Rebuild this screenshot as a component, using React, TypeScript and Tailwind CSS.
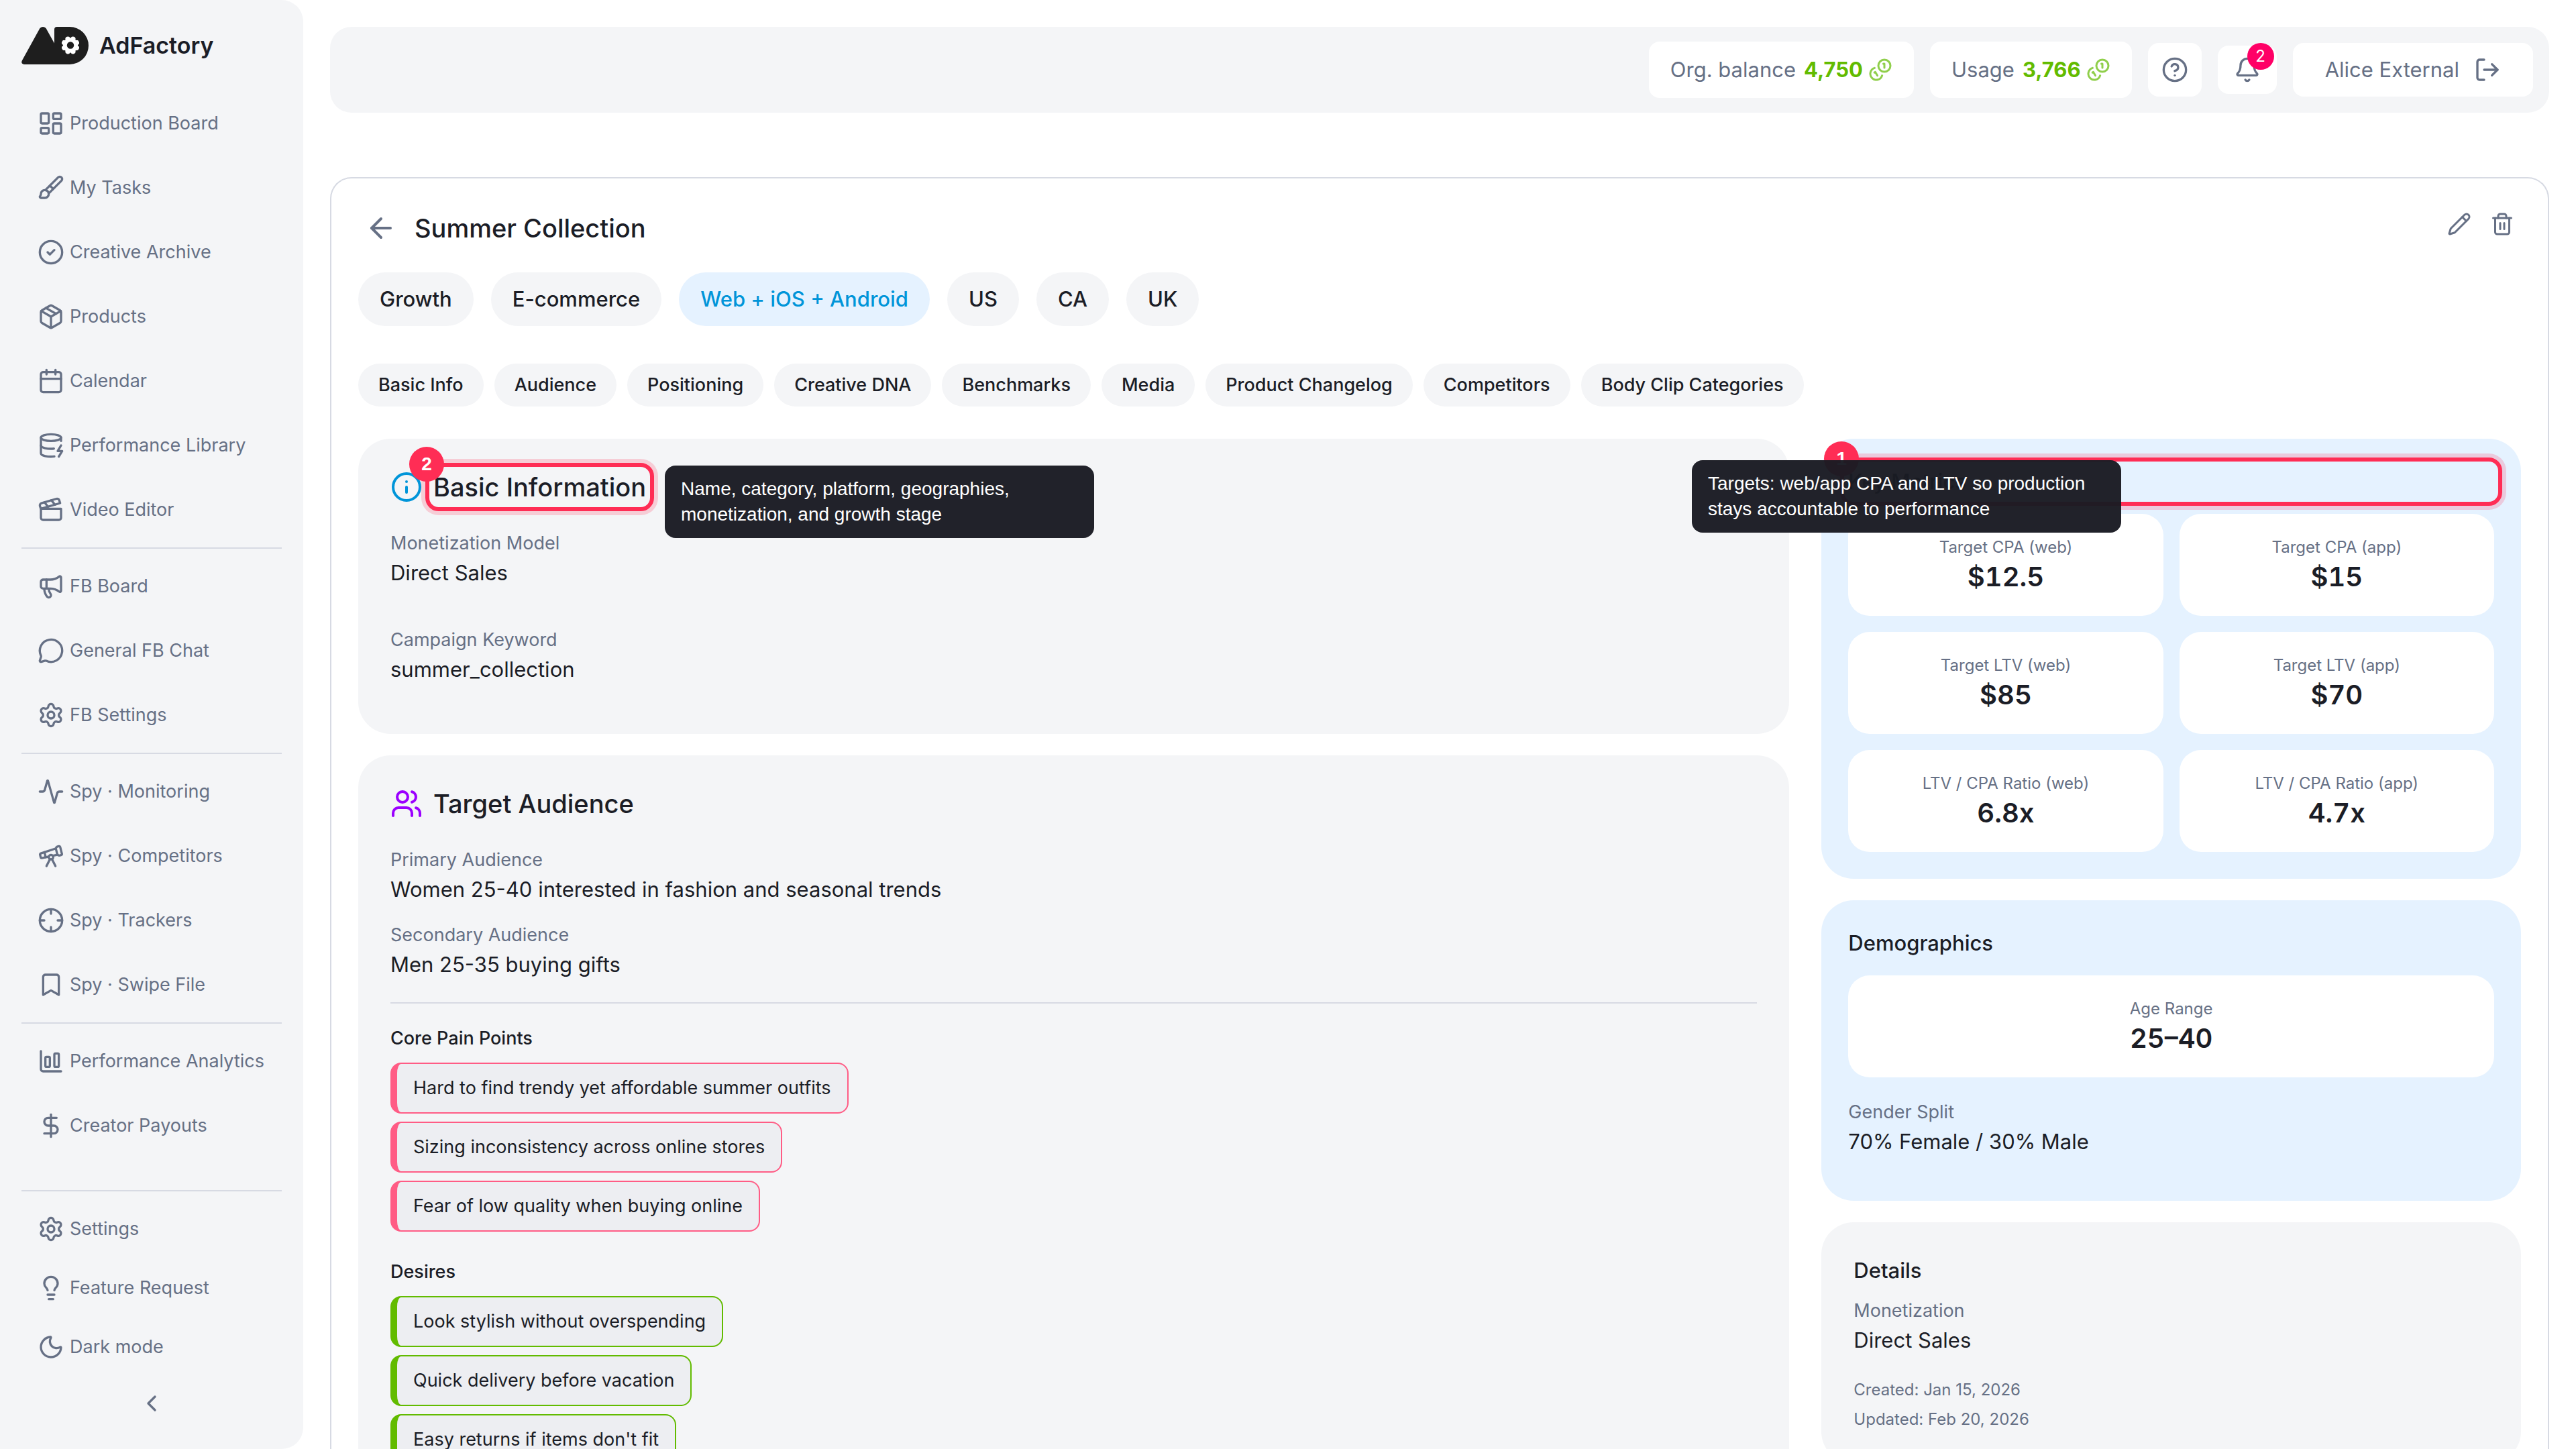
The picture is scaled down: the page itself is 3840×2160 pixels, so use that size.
import React from 'react';
import {
  Activity, ArrowLeft, Bell, Bookmark, Brush, Calendar, ChartColumnBig, ChevronLeft,
  CircleCheck, CircleQuestionMark, Clapperboard, Crosshair, DatabaseZap, DollarSign,
  Info, LayoutDashboard, Lightbulb, LogOut, Megaphone, MessageCircle, Moon, Package,
  Pencil, Settings, Telescope, Trash2, Users, type LucideIcon
} from 'lucide-react';

interface NavItem { label: string; icon: LucideIcon; }

const NAV_GROUPS: NavItem[][] = [
  [
    { label: 'Production Board', icon: LayoutDashboard },
    { label: 'My Tasks', icon: Brush },
    { label: 'Creative Archive', icon: CircleCheck },
    { label: 'Products', icon: Package },
    { label: 'Calendar', icon: Calendar },
    { label: 'Performance Library', icon: DatabaseZap },
    { label: 'Video Editor', icon: Clapperboard },
  ],
  [
    { label: 'FB Board', icon: Megaphone },
    { label: 'General FB Chat', icon: MessageCircle },
    { label: 'FB Settings', icon: Settings },
  ],
  [
    { label: 'Spy · Monitoring', icon: Activity },
    { label: 'Spy · Competitors', icon: Telescope },
    { label: 'Spy · Trackers', icon: Crosshair },
    { label: 'Spy · Swipe File', icon: Bookmark },
  ],
  [
    { label: 'Performance Analytics', icon: ChartColumnBig },
    { label: 'Creator Payouts', icon: DollarSign },
  ],
];

const TAGS = ['Growth', 'E-commerce', 'Web + iOS + Android', 'US', 'CA', 'UK'];
const ACTIVE_TAG = 'Web + iOS + Android';

const SECTIONS = [
  'Basic Info', 'Audience', 'Positioning', 'Creative DNA', 'Benchmarks',
  'Media', 'Product Changelog', 'Competitors', 'Body Clip Categories',
];

const METRICS = [
  { label: 'Target CPA (web)', value: '$12.5' },
  { label: 'Target CPA (app)', value: '$15' },
  { label: 'Target LTV (web)', value: '$85' },
  { label: 'Target LTV (app)', value: '$70' },
  { label: 'LTV / CPA Ratio (web)', value: '6.8x' },
  { label: 'LTV / CPA Ratio (app)', value: '4.7x' },
];

const PAIN_POINTS = [
  'Hard to find trendy yet affordable summer outfits',
  'Sizing inconsistency across online stores',
  'Fear of low quality when buying online',
];

const DESIRES = [
  'Look stylish without overspending',
  'Quick delivery before vacation',
  "Easy returns if items don't fit",
];

const GEAR_TEETH = [22.5, 67.5, 112.5, 157.5, 202.5, 247.5, 292.5, 337.5];

const Logo = () => (
  <svg viewBox="0 0 100 56" className="h-14 w-[100px] shrink-0" aria-hidden="true">
    <path fill="#1e1e1e" d="M27.5 2Q32 -2 36.500 2L49 24.500V4Q49 0 53 0H72A28 28 0 0 1 72 56H4Q-1.500 55 1 50Z" />
    <g fill="#fff">
      <circle cx="73" cy="27.500" r="11" />
      {GEAR_TEETH.map(a => (
        <circle key={a} cx="73" cy="17.500" r="3.700" transform={`rotate(${a} 73 27.5)`} />
      ))}
    </g>
    <circle cx="73" cy="27.500" r="5.200" fill="#1e1e1e" />
  </svg>
);

const CoinsIcon = () => (
  <svg viewBox="0 0 24 24" className="size-9 opacity-70" fill="none" stroke="currentColor" strokeWidth="2" strokeLinecap="round" strokeLinejoin="round" aria-hidden="true">
    <path d="M13.744 17.736a6 6 0 1 1-7.48-7.48" />
    <path d="M15 6h1v4" />
    <path d="m6.134 14.768.866-.5 2 3.464" />
    <circle cx="16" cy="8" r="6" />
  </svg>
);

const NavLink = ({ label, icon: Icon }: NavItem) => (
  <a href="#" className="flex h-20 items-center gap-2 pl-6 text-[27px] leading-[40px]">
    <Icon className="size-10 shrink-0" />
    <span className="whitespace-nowrap">{label}</span>
  </a>
);

const Sidebar = () => (
  <aside className="flex h-full w-[452px] shrink-0 flex-col rounded-r-[32px] bg-[#f4f5f7] px-8 pt-10 text-[#667085]">
    <div className="flex items-center gap-4">
      <Logo />
      <span className="text-[34px] leading-[48px] font-semibold text-[#1b1d26]">AdFactory</span>
    </div>
    <nav className="mt-12 flex flex-col gap-4">
      {NAV_GROUPS.map((group, i) => (
        <React.Fragment key={i}>
          {i > 0 && <hr className="border-t-2 border-[#d7dae3]" />}
          {group.map(item => <NavLink key={item.label} {...item} />)}
        </React.Fragment>
      ))}
    </nav>
    <div className="mt-auto flex flex-col gap-2 pb-12">
      <hr className="mb-2 border-t-2 border-[#d7dae3]" />
      <NavLink label="Settings" icon={Settings} />
      <NavLink label="Feature Request" icon={Lightbulb} />
      <button type="button" className="flex h-20 items-center gap-2 pl-6 text-[27px] leading-[40px]">
        <Moon className="size-10 shrink-0" />
        Dark mode
      </button>
      <button type="button" aria-label="Collapse sidebar" className="mt-4 flex justify-center">
        <ChevronLeft className="size-10" />
      </button>
    </div>
  </aside>
);

const Balance = ({ label, value }: { label: string; value: string }) => (
  <div className="flex h-[84px] items-center gap-3 rounded-2xl bg-white px-8">
    <span>{label}</span>
    <span className="flex items-center gap-2 font-bold text-[#62bb00]">
      {value}
      <CoinsIcon />
    </span>
  </div>
);

const TopBar = () => (
  <header className="flex h-32 shrink-0 items-center justify-end gap-6 rounded-[32px] bg-[#f4f5f7] px-6 text-[31px] leading-[48px] text-[#667085]">
    <Balance label="Org. balance" value="4,750" />
    <Balance label="Usage" value="3,766" />
    <button type="button" aria-label="Help" className="flex size-20 items-center justify-center rounded-2xl bg-white">
      <CircleQuestionMark className="size-10" />
    </button>
    <button type="button" aria-label="Notifications" className="relative flex h-[72px] w-[88px] items-center justify-center rounded-2xl bg-white">
      <Bell className="size-10" />
      <span className="absolute -top-1 right-1 flex size-10 items-center justify-center rounded-full bg-[#ff0066] text-[24px] leading-[32px] text-white">2</span>
    </button>
    <button type="button" className="flex h-20 items-center gap-[22px] rounded-2xl bg-white px-12">
      Alice External
      <LogOut className="size-10" />
    </button>
  </header>
);

const Field = ({ label, value }: { label: string; value: string }) => (
  <div className="pb-6">
    <dt className="text-[27px] leading-[40px] text-[#667085]">{label}</dt>
    <dd className="text-[31px] leading-[48px]">{value}</dd>
  </div>
);

const Tile = ({ label, value }: { label: string; value: string }) => (
  <div className="flex flex-col items-center gap-0.5 rounded-[32px] bg-white pt-8 pb-[34px]">
    <dt className="text-[24px] leading-[36px] text-[#667085]">{label}</dt>
    <dd className="text-[40px] leading-[48px] font-semibold tabular-nums">{value}</dd>
  </div>
);

// Red frame and numbered marker drawn over the heading it points at
const Callout = ({ step }: { step: number }) => (
  <>
    <span className="absolute -inset-3 rounded-[20px] border-[6px] border-[#ff2d55] ring-[6px] ring-[#ff2d55]/20" />
    <span className="absolute -top-9 -left-9 flex size-[52px] items-center justify-center rounded-full bg-[#ff2d55] font-['Liberation_Sans',sans-serif] text-[28px] leading-[32px] font-bold text-white">{step}</span>
  </>
);

const TIP = "w-[640px] rounded-2xl bg-[#1a1b23]/97 px-6 py-4 font-['Liberation_Sans',sans-serif] text-[28px] leading-[38px] font-normal text-white";

const PointList = ({ title, items, tone }: { title: string; items: string[]; tone: string }) => (
  <section>
    <h3 className="mb-4 text-[27px] leading-[40px] font-medium">{title}</h3>
    <ul className="flex flex-col items-start gap-3">
      {items.map(item => (
        <li key={item} className={`rounded-2xl border-2 border-l-[10px] bg-[#edeef2] px-6 py-4 text-[27px] leading-[40px] ${tone}`}>{item}</li>
      ))}
    </ul>
  </section>
);

const ProductCard = () => (
  <main className="mt-24 flex-1 rounded-t-[32px] border-2 border-b-0 border-[#d7dae3] p-10">
    <div className="flex items-start justify-between">
      <div className="flex h-[68px] items-center gap-[26px] pl-2.5">
        <button type="button" aria-label="Back" className="text-[#667085]"><ArrowLeft className="size-12" /></button>
        <h1 className="text-[38px] leading-[48px] font-medium">Summer Collection</h1>
      </div>
      <div className="flex gap-3 pt-0.5 pr-0.5 text-[#667085]">
        <button type="button" aria-label="Edit" className="p-2"><Pencil className="size-9" /></button>
        <button type="button" aria-label="Delete" className="p-2"><Trash2 className="size-9" /></button>
      </div>
    </div>

    <div className="mt-8 flex gap-[26px]">
      {TAGS.map(tag => (
        <span key={tag} className={`flex h-20 items-center rounded-full px-8 text-[31px] leading-[48px] font-medium ${tag === ACTIVE_TAG ? 'bg-[#e5f2ff] text-[#0095d9]' : 'bg-[#f4f5f7]'}`}>{tag}</span>
      ))}
    </div>

    <div className="mt-14 flex gap-4">
      {SECTIONS.map(s => (
        <button key={s} type="button" className="h-16 rounded-full bg-[#f4f5f7] px-[30px] text-[27px] leading-[40px] font-medium whitespace-nowrap">{s}</button>
      ))}
    </div>

    <div className="mt-12 grid grid-cols-12 gap-12">
      <div className="col-span-8 flex flex-col gap-8">
        <section className="rounded-[48px] bg-[#f4f5f7] p-12">
          <div className="flex items-center gap-4">
            <Info className="size-12 text-[#0095d9]" />
            <h2 className="relative text-[38px] leading-[48px] font-medium">
              Basic Information
              <Callout step={2} />
              <span className={`absolute -top-2 left-full ml-7 ${TIP}`}>Name, category, platform, geographies, monetization, and growth stage</span>
            </h2>
          </div>
          <dl className="mt-10 flex flex-col gap-8">
            <Field label="Monetization Model" value="Direct Sales" />
            <Field label="Campaign Keyword" value="summer_collection" />
          </dl>
        </section>

        <section className="rounded-[48px] bg-[#f4f5f7] p-12">
          <div className="flex items-center gap-4">
            <Users className="size-12 text-[#9b00ff]" />
            <h2 className="text-[38px] leading-[48px] font-medium">Target Audience</h2>
          </div>
          <dl className="mt-10">
            <Field label="Primary Audience" value="Women 25-40 interested in fashion and seasonal trends" />
            <Field label="Secondary Audience" value="Men 25-35 buying gifts" />
          </dl>
          <hr className="mt-2 mb-8 border-t-2 border-[#d7dae3]" />
          <div className="flex flex-col gap-10">
            <PointList title="Core Pain Points" items={PAIN_POINTS} tone="border-[#ff5c85]" />
            <PointList title="Desires" items={DESIRES} tone="border-[#62bb00]" />
          </div>
        </section>
      </div>

      <div className="col-span-4 flex flex-col gap-8">
        <section className="rounded-[48px] bg-[#e5f2ff] p-10">
          <h2 className="relative mb-6 text-[31px] leading-[48px] font-medium">
            Key Metrics
            <Callout step={1} />
            <span className={`absolute -top-2 right-[556px] ${TIP}`}>Targets: web/app CPA and LTV so production stays accountable to performance</span>
          </h2>
          <dl className="grid grid-cols-2 gap-6">
            {METRICS.map(m => <Tile key={m.label} {...m} />)}
          </dl>
        </section>

        <section className="rounded-[48px] bg-[#e5f2ff] p-10">
          <h2 className="mb-6 text-[31px] leading-[48px] font-medium">Demographics</h2>
          <dl className="flex flex-col gap-8">
            <Tile label="Age Range" value="25–40" />
            <Field label="Gender Split" value="70% Female / 30% Male" />
          </dl>
        </section>

        <section className="rounded-[48px] bg-[#f4f5f7] p-12">
          <h2 className="mb-4 text-[31px] leading-[48px] font-medium">Details</h2>
          <dl><Field label="Monetization" value="Direct Sales" /></dl>
          <div className="mt-2 flex flex-col gap-2 text-[24px] leading-[36px] text-[#667085]">
            <p>Created: Jan 15, 2026</p>
            <p>Updated: Feb 20, 2026</p>
          </div>
        </section>
      </div>
    </div>
  </main>
);

export default function App() {
  return (
    <div className="flex h-screen overflow-hidden bg-white font-['Inter',sans-serif] text-[#1b1d26]">
      <Sidebar />
      <div className="flex min-w-0 flex-1 flex-col px-10 pt-10">
        <TopBar />
        <ProductCard />
      </div>
    </div>
  );
}
